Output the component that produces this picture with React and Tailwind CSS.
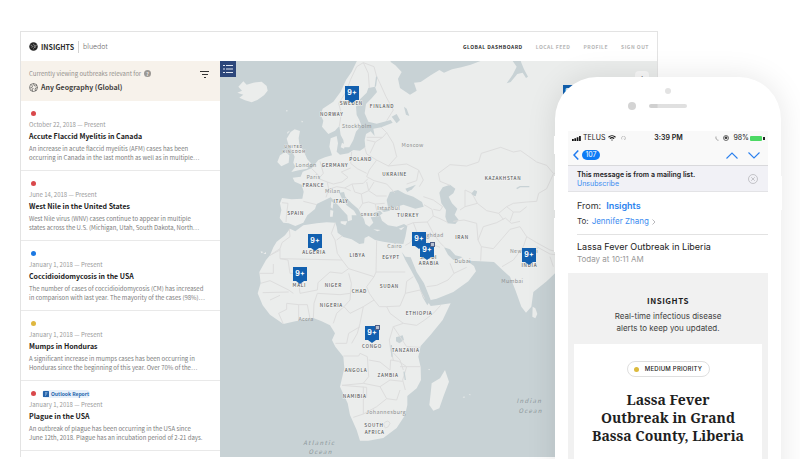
import React from "react";

const outbreaks = [
  {
    dot: "bg-[#d9484b]",
    date: "October 22, 2018 — Present",
    title: "Accute Flaccid Myelitis in Canada",
    lines: [
      "An increase in acute flaccid myelitis (AFM) cases has been",
      "occurring in Canada in the last month as well as in multiple…",
    ],
  },
  {
    dot: "bg-[#d9484b]",
    date: "June 14, 2018 — Present",
    title: "West Nile in the United States",
    lines: [
      "West Nile virus (WNV) cases continue to appear in multiple",
      "states across the U.S. (Michigan, Utah, South Dakota, North…",
    ],
  },
  {
    dot: "bg-[#1b78e2]",
    date: "January 1, 2018 — Present",
    title: "Coccidioidomycosis in the USA",
    lines: [
      "The number of cases of coccidioidomycosis (CM) has increased",
      "in comparison with last year. The mayority of the cases (98%)…",
    ],
  },
  {
    dot: "bg-[#dfb73f]",
    date: "January 1, 2018 — Present",
    title: "Mumps in Honduras",
    lines: [
      "A significant increase in mumps cases has been occurring in",
      "Honduras since the beginning of this year. Over 70% of the…",
    ],
  },
  {
    dot: "bg-[#d9484b]",
    date: "January 1, 2018 — Present",
    title: "Plague in the USA",
    report: true,
    lines: [
      "An outbreak of plague has been occurring in the USA since",
      "June 12th, 2018. Plague has an incubation period of 2-21 days.",
    ],
  },
];

// Map drawing units: three per pixel.
const MAINLAND =
  "M412,0 L395,35 378,60 362,95 340,125 308,146 302,165 310,182 306,200 325,222 345,212 358,198 362,225 370,240 373,262 388,262 400,240 408,215 424,196 418,180 410,165 408,140 420,118 440,98 445,84 465,80 471,96 455,115 438,132 434,160 445,185 470,191 512,180 518,188 484,202 460,206 464,228 452,214 438,222 434,240 436,262 420,272 400,270 385,280 360,284 350,275 354,250 350,228 332,235 328,260 336,286 315,292 295,300 275,325 248,335 242,350 218,353 224,365 245,374 251,395 247,416 215,418 186,414 180,430 184,450 179,474 190,488 206,490 226,498 250,488 262,466 285,447 290,432 315,420 332,412 348,428 365,448 382,466 384,484 396,480 395,466 410,466 402,452 380,436 366,416 358,398 372,396 376,410 395,430 415,447 425,466 432,478 436,492 448,500 460,488 452,472 468,470 462,458 480,452 488,460 480,466 486,482 504,496 530,500 552,492 562,498 556,530 550,552 520,550 490,545 465,540 446,528 434,534 432,550 418,552 395,538 370,531 353,518 350,500 346,488 320,487 290,490 250,496 226,514 210,506 195,526 170,545 160,562 150,586 138,600 118,636 122,670 113,700 128,736 150,764 190,792 226,784 280,774 305,784 330,796 345,820 336,840 346,860 370,890 373,925 360,980 383,1030 390,1065 410,1110 420,1142 445,1142 490,1134 530,1104 555,1066 562,1035 562,1008 590,985 603,960 602,922 595,890 602,858 632,824 668,780 692,730 662,734 632,738 622,722 650,716 700,696 745,664 768,634 762,618 742,604 734,588 718,596 700,600 684,584 672,562 690,568 706,586 724,590 745,602 780,604 822,606 850,632 870,650 886,690 904,740 918,758 934,740 940,696 980,664 1005,640 1060,620 1110,700 1311,760 2600,760 2600,-200 430,-200 Z";

const COUNTRY_LINES =
  "M358,198 L364,160 356,130 378,96 392,58 410,20 430,8 M430,8 L445,40 448,84 M430,8 L462,20 470,50 480,70 498,110 520,150 500,182 M484,202 L500,218 488,232 440,232 M500,218 L520,250 530,290 505,318 470,300 440,282 434,262 M440,240 L466,246 488,232 M466,246 L450,280 M505,318 L560,312 596,330 590,362 560,372 M470,300 L448,330 440,350 462,362 500,372 524,398 M395,276 L392,310 412,326 440,340 M300,304 L310,340 296,356 322,366 340,372 366,366 384,352 364,336 392,324 M275,326 L296,346 M322,366 L326,388 318,412 M326,388 L350,380 374,384 396,372 430,370 444,356 M374,384 L392,392 M396,372 L404,396 424,402 428,430 418,446 M424,402 L446,392 440,366 M446,392 L470,408 500,408 M428,430 L446,426 466,432 494,430 M466,432 L470,452 M250,424 L290,434 M186,428 L204,430 200,460 198,486 M446,392 L462,366 M560,496 L580,488 622,486 640,468 636,448 612,434 M640,468 L660,476 684,488 M622,486 L640,520 660,548 672,560 M580,488 L592,520 570,548 556,556 M592,520 L624,548 660,562 M610,410 L640,420 668,440 660,452 640,448 M596,330 L610,360 598,380 M700,484 L732,480 770,490 774,540 784,560 782,602 M774,540 L790,500 830,488 856,474 874,490 900,484 M784,560 L820,566 846,536 870,508 900,500 920,530 910,560 880,600 846,620 M655,340 L690,314 740,318 776,306 784,280 842,262 880,276 902,272 950,306 980,316 1000,340 1020,340 M655,340 L660,364 690,376 M735,390 L735,440 772,430 800,452 836,460 860,440 880,430 920,426 950,424 956,400 980,386 1000,342 M735,440 L720,450 M772,430 L756,400 735,390 M836,460 L850,478 M860,440 L880,456 900,456 920,440 M880,456 L870,484 M920,530 L950,548 990,570 1030,580 M950,560 L990,582 1020,586 M990,590 L1000,620 M620,680 L650,676 684,660 702,640 740,622 M702,640 L690,610 M208,506 L210,530 186,548 180,566 150,586 M346,488 L334,520 345,540 352,580 366,600 M350,540 L366,528 M470,542 L468,636 556,636 M468,636 L462,650 386,626 366,640 330,636 294,668 292,690 240,700 232,640 210,640 204,600 180,596 180,566 M180,596 L366,600 386,626 M150,586 L180,570 M118,640 L160,640 160,612 M122,670 L150,662 206,690 220,700 M128,698 L206,696 M150,720 L180,706 M190,792 L176,760 200,748 200,730 236,734 236,780 M236,734 L262,734 270,776 M280,774 L282,730 292,700 M386,640 L394,670 390,720 372,740 M292,700 L360,704 390,700 M372,740 L350,760 340,790 M372,740 L390,760 430,740 462,720 448,700 440,680 462,650 M462,720 L478,740 500,740 540,738 556,700 560,664 580,650 M556,700 L600,690 614,716 M500,740 L510,760 550,790 590,796 614,780 640,760 662,736 M550,790 L520,800 508,840 512,870 520,900 M520,800 L560,860 600,862 M430,740 L420,790 412,820 395,850 M346,850 L380,850 386,820 420,800 M370,888 L416,888 420,880 442,890 446,950 430,970 366,976 M446,900 L480,906 510,930 512,900 536,904 560,920 548,960 M430,970 L480,980 510,960 548,964 M366,976 L440,982 440,1010 430,1018 M430,980 L430,1062 400,1072 M430,1062 L470,1040 500,1016 480,980 M500,1016 L530,1020 540,990 M540,920 L602,920 M490,1092 q14,-16 20,-2 q-4,14 -14,14 z M548,960 L556,990 M512,870 L540,900 550,930";

const RIVERS =
  "M470,50 L466,80 M514,855 L516,890 M552,935 L556,960 M890,386 L900,380 928,380 M755,400 l10,6 4,-12";

const labels = [
  ["SWEDEN", 394, 134], ["FINLAND", 486, 143], ["NORWAY", 335, 168], ["POLAND", 422, 304],
  ["GERMANY", 345, 320], ["FRANCE", 280, 381], ["UKRAINE", 524, 349], ["ITALY", 363, 428],
  ["SPAIN", 227, 464], ["TURKEY", 564, 470], ["ALGERIA", 282, 582], ["LIBYA", 412, 591],
  ["EGYPT", 513, 596], ["MALI", 238, 680], ["NIGER", 340, 680], ["CHAD", 418, 698],
  ["SUDAN", 508, 685], ["NIGERIA", 334, 741], ["ETHIOPIA", 597, 765], ["CONGO", 456, 864],
  ["TANZANIA", 557, 876], ["ANGOLA", 408, 936], ["ZAMBIA", 504, 951], ["NAMIBIA", 404, 1015],
  ["SOUTH", 462, 1101], ["AFRICA", 464, 1122], ["KAZAKHSTAN", 849, 360], ["IRAN", 726, 537],
  ["SAUDI", 626, 596], ["ARABIA", 627, 615], ["INDIA", 928, 620],
];

const smallLabels = [
  ["UNITED", 221, 265], ["KINGDOM", 223, 279], ["GREECE", 450, 468],
];

const cities = [
  ["Stockholm", 411, 204], ["London", 258, 321], ["Paris", 280, 357], ["Milan", 338, 398],
  ["Moscow", 578, 261], ["Istanbul", 506, 450], ["Cairo", 524, 565], ["Baghdad", 634, 532],
  ["Dubai", 728, 610], ["Accra", 258, 783], ["Johannesburg", 498, 1062], ["New Delhi", 912, 579],
  ["Mumbai", 877, 668],
];

const oceans = [
  ["Atlantic", 298, 1154], ["Ocean", 302, 1183], ["Indian", 928, 1030], ["Ocean", 932, 1059],
];

const markers = [
  { place: "Sweden", pos: "left-[125px] top-[25px]" },
  { place: "Algeria", pos: "left-[88px] top-[173px]" },
  { place: "Mali", pos: "left-[73px] top-[206px]" },
  { place: "Congo", pos: "left-[145px] top-[265px]", report: true },
  { place: "Iraq", pos: "left-[192px] top-[171px]" },
  { place: "Saudi Arabia", pos: "left-[200px] top-[182px]", report: true },
  { place: "India", pos: "left-[302px] top-[187px]" },
  { place: "Mongolia", pos: "left-[343px] top-[24px]" },
];

function WorldMap() {
  return (
    <svg
      className="absolute left-0 top-0 h-[397px] w-[437px] overflow-visible"
      viewBox="0 3 1311 1191"
      aria-label="Outbreak map"
    >
      <g fill="#ebedec">
        <path d={MAINLAND} />
        <path d="M55,80 L70,64 80,74 100,68 125,65 140,78 143,92 132,106 112,120 95,127 75,121 58,113 70,104 52,98 66,92Z" />
        <path d="M212,216 L224,208 240,213 236,234 238,252 252,276 262,298 273,310 262,326 236,331 214,336 226,320 220,308 224,290 216,272 206,256 200,236Z" />
        <path d="M180,286 L196,276 208,286 206,308 184,319 172,306Z" />
        <path d="M675,930 L687,965 670,1010 658,1045 640,1052 628,1035 632,1000 635,970 660,955Z" />
        <path d="M938,740 L946,745 952,762 946,775 937,770Z" />
        <path d="M334,424 l6,4 -2,18 -6,-4z M331,450 l9,2 -2,18 -8,0z" />
        <path d="M362,484 l20,0 -6,12 -14,-6z M460,508 l22,2 -10,4z M536,506 l18,-6 -10,10z" />
        <path d="M366,248 l10,6 -4,12 -10,-4z M198,150 l6,2 -4,3z M244,182 l5,2 -3,4z M202,216 l8,-4 -8,10z" />
        <path d="M122,574 l8,2 -6,4z M130,582 l8,-6 0,6z M728,1012 l5,-3 1,5z M746,1004 l5,-2 0,4z M624,928 l6,-1 -2,4z" />
      </g>
      <g fill="#c8d2d5">
        <path d="M508,-60 L512,6 526,16 545,36 534,56 540,84 570,104 590,92 582,68 602,66 632,46 658,30 672,38 696,28 724,22 752,14 784,2 800,-60Z" />
        <path d="M876,0 L890,20 878,44 860,70 872,66 892,42 908,38 918,54 924,50 912,28 904,8 898,-10Z" />
        <path d="M500,420 L510,396 534,390 556,402 580,410 606,426 611,440 586,446 550,434 524,442 504,440Z" />
        <path d="M556,386 L588,374 576,388 562,396Z" />
        <path d="M658,398 L668,382 690,374 706,386 700,400 686,410 696,430 712,446 704,464 716,480 706,492 682,490 676,470 678,450 664,430Z" />
        <path d="M545,576 L556,590 572,592 590,636 612,670 624,700 632,720 622,736 608,712 596,674 574,632 556,600Z" />
        <path d="M515,170 L530,162 540,180 530,190Z M552,140 l8,6 8,22 -10,-4z" />
        <path d="M528,832 L548,826 552,840 538,850 528,844Z" />
        <path d="M484,452 l22,-6 4,6 -18,4z" />
        <path d="M755,400 l8,-10 8,4 -4,14 -8,-2z" />
      </g>
      <path d={COUNTRY_LINES} fill="none" stroke="#dddddd" strokeWidth="3" strokeLinejoin="round" />
      <path d={RIVERS} fill="none" stroke="#c8d2d5" strokeWidth="4" />
      <g textAnchor="middle" className="font-['Noto_Sans_CJK_SC','Noto_Sans',sans-serif]">
        <g fill="#5c5e5f" fontSize="14" fontWeight="500" letterSpacing="2" stroke="#f3f4f3" strokeWidth="3" paintOrder="stroke">
          {labels.map(([t, x, y]) => (
            <text key={t} x={x} y={y}>{t}</text>
          ))}
        </g>
        <g fill="#7b7d7e" fontSize="12" fontWeight="500" letterSpacing="2" stroke="#f3f4f3" strokeWidth="2" paintOrder="stroke">
          {smallLabels.map(([t, x, y]) => (
            <text key={t} x={x} y={y}>{t}</text>
          ))}
        </g>
        <g fill="#8f9192" fontSize="16" letterSpacing="1">
          {cities.map(([t, x, y]) => (
            <text key={t} x={x} y={y}>{t}</text>
          ))}
        </g>
        <g fill="#8c979b" fontSize="18" fontStyle="italic" letterSpacing="4">
          {oceans.map(([t, x, y]) => (
            <text key={t + y} x={x} y={y}>{t}</text>
          ))}
        </g>
      </g>
    </svg>
  );
}

function Marker({ place, pos, report }) {
  return (
    <button
      type="button"
      aria-label={place + ", 9+ outbreaks"}
      className={"absolute h-[14px] w-[14px] bg-[#1260af] text-center font-['Inter',sans-serif] text-[7px] leading-[14px] font-bold text-white " + pos}
    >
      9+
      <span className="absolute left-1/2 top-full -translate-x-1/2 border-x-[4px] border-t-[3px] border-x-transparent border-t-[#1260af]" />
      {report && (
        <span className="absolute -top-px -right-px h-[5px] w-[5px] border border-[#4f5f86] bg-[#b9c1d2]" />
      )}
    </button>
  );
}

function Outbreak({ item }) {
  return (
    <li className="h-[70px] border-b border-[#e9e9e9] pl-2 pt-2 whitespace-nowrap">
      <div className="flex h-[9px] items-center">
        <span className={"ml-[2px] h-[5px] w-[5px] rounded-full " + item.dot} />
        {item.report && (
          <a href="#report" className="ml-[6px] flex h-[8px] items-center gap-[2px] rounded-sm bg-[#e8f1fb] px-px text-[5px] leading-[8px] font-bold text-[#2463ab]">
            <svg className="h-[6px] w-[6px]" viewBox="0 0 12 12" aria-hidden="true">
              <rect width="12" height="12" rx="1" fill="#2463ab" />
              <path d="M4 3.5h5M4 6h4M4 8.500h2" stroke="#cfe0f3" strokeWidth="1.2" />
            </svg>
            Outlook Report
          </a>
        )}
      </div>
      <p className="mt-[3px] text-[6px] leading-[8px] text-[#9a9a9a]">{item.date}</p>
      <h2 className="mt-[2px] text-[7px] leading-[11px] font-bold text-[#1c1c1c]">{item.title}</h2>
      <p className="mt-[2px] text-[6px] leading-[9px] text-[#7c7c7c]">
        {item.lines[0]}
        <br />
        {item.lines[1]}
      </p>
    </li>
  );
}

function Dashboard() {
  return (
    <div className="mr-[142px] ml-5 border-x border-t border-[#e3e3e3] bg-white font-['Noto_Sans_CJK_SC','Noto_Sans',sans-serif]">
      <header className="flex h-[29px] items-center justify-between pr-2 pl-2">
        <div className="flex items-center">
          <svg className="h-[9px] w-[9px]" viewBox="0 0 18 18" aria-hidden="true">
            <circle cx="9" cy="9" r="8.500" fill="#262626" />
            <path d="M3 6l3 1 1 3-2 1M8 4l3 2-1 4 2 2 1-5 3-1M8 13l2 1" fill="none" stroke="#a9a9a9" strokeWidth="1.300" />
          </svg>
          <span className="ml-[3px] text-[7px] leading-[12px] font-bold text-[#2b2b2b]">INSIGHTS</span>
          <span className="mx-1 h-3 w-px bg-[#d2d2d2]" />
          <span className="font-['Inter',sans-serif] text-[7px] leading-[12px] font-light text-[#6f6f6f]">bluedot</span>
        </div>
        <nav className="flex gap-[13px] text-[5px] leading-[9px] font-bold tracking-[0.5px] text-[#b5b5b5]">
          <a href="#dashboard" className="text-[#303030]">GLOBAL DASHBOARD</a>
          <a href="#feed">LOCAL FEED</a>
          <a href="#profile">PROFILE</a>
          <a href="#signout">SIGN OUT</a>
        </nav>
      </header>
      <div className="flex">
        <aside className="w-[199px] shrink-0 pb-[6px]">
          <div className="flex h-10 items-start justify-between bg-[#f7f2eb] pr-[11px] pl-2">
            <div className="pt-[7px]">
              <p className="flex items-center gap-[3px] text-[6px] leading-[11px] text-[#94918d]">
                Currently viewing outbreaks relevant for
                <span className="flex h-[7px] w-[7px] items-center justify-center rounded-full bg-[#9b9894] text-[5px] leading-[7px] font-bold text-[#f7f2eb]">?</span>
              </p>
              <p className="mt-[3px] flex items-center gap-[3px] text-[7px] leading-[11px] font-bold text-[#454341]">
                <svg className="h-[9px] w-[9px]" viewBox="0 0 18 18" fill="none" stroke="#555" strokeWidth="1.400" aria-hidden="true">
                  <circle cx="9" cy="9" r="8" />
                  <path d="M4 3l3 3-1 3-4 1M7 17l-1-5 3-1M9 1l1 4 3 1 3-2M17 9l-4 1-1 4 2 2" />
                </svg>
                Any Geography (Global)
              </p>
            </div>
            <button type="button" aria-label="Filter outbreaks" className="mt-[10px] flex w-[9px] flex-col items-center gap-[2px]">
              <span className="h-px w-[9px] bg-[#333]" />
              <span className="h-px w-[6px] bg-[#333]" />
              <span className="h-px w-[2px] bg-[#333]" />
            </button>
          </div>
          <ul>
            {outbreaks.map((o) => (
              <Outbreak key={o.title} item={o} />
            ))}
          </ul>
        </aside>
        <main className="relative flex-1 overflow-hidden bg-[#c8d2d5]">
          <WorldMap />
          {markers.map((m) => (
            <Marker key={m.place} {...m} />
          ))}
          <button type="button" aria-label="Toggle list" className="absolute top-0 left-0 flex h-4 w-4 items-center justify-center bg-[#2d477b]">
            <svg className="h-[10px] w-[10px]" viewBox="0 0 10 10" aria-hidden="true">
              <path d="M0 1.500h2M3 1.500h7M0 5h2M3 5h7M0 8.500h2M3 8.500h7" stroke="#dfe6f2" strokeWidth="1.200" />
            </svg>
          </button>
          <button type="button" aria-label="Zoom in" className="absolute top-[10px] right-2 h-[14px] w-[14px] rounded-sm bg-[#f8f8f8] text-[8px] leading-[10px] font-bold text-[#444]">
            +
          </button>
        </main>
      </div>
    </div>
  );
}

function Phone() {
  return (
    <div className="absolute top-[77px] right-[19px] w-[226px] rounded-t-[42px] bg-white px-[13px] pb-24 font-['Inter',sans-serif] shadow-[0_0_30px_rgba(0,0,0,0.10)]">
      <span className="absolute top-[59px] -left-px h-[18px] w-px bg-white" />
      <span className="absolute top-[99px] -left-px h-[34px] w-px bg-white" />
      <span className="absolute top-[141px] -left-px h-[34px] w-px bg-white" />
      <span className="absolute top-[99px] -right-px h-[34px] w-px bg-white" />

      <div className="flex h-[54px] flex-col items-center pt-[11px]">
        <span className="h-[6px] w-[6px] rounded-full bg-[#e3e3e3]" />
        <div className="mt-2 mr-[22px] flex items-center gap-[13px]">
          <span className="h-2 w-2 rounded-full bg-[#d4d4d4]" />
          <span className="h-1 w-[38px] rounded-full bg-gradient-to-r from-[#d0d0d0] from-20% to-[#e0e0e0] to-25%" />
        </div>
      </div>

      <div className="border-b border-[#d9d9dc] bg-[#f9f9f9]">
        <div className="grid h-[14px] grid-cols-[1fr_auto_1fr] items-center pr-[3px] pl-1 text-[7px] leading-[10px] text-[#222]">
          <div className="flex items-center gap-[2px]">
            <svg className="h-[5px] w-[9px]" viewBox="0 0 18 10" fill="#111" aria-hidden="true">
              <rect x="0" y="6" width="3.500" height="4" />
              <rect x="4.700" y="4.500" width="3.500" height="5.500" />
              <rect x="9.400" y="2.500" width="3.500" height="7.500" />
              <rect x="14.100" y="0" width="3.500" height="10" />
            </svg>
            <span>TELUS</span>
            <svg className="ml-px h-[6px] w-[8px]" viewBox="0 0 16 12" fill="none" stroke="#111" strokeWidth="2.200" aria-hidden="true">
              <path d="M1 4.500C5 .5 11 .5 15 4.500M3.800 7.300c2.400-2.300 6-2.300 8.400 0" />
              <path d="M6 9.500h4L8 11.500z" fill="#111" stroke="none" />
            </svg>
            <svg className="ml-[3px] h-[5px] w-[5px]" viewBox="0 0 10 10" fill="none" stroke="#b5b5b5" strokeWidth="1.500" aria-hidden="true">
              <path d="M2 7a4 4 0 1 1 6 0M6 5l2 3" />
            </svg>
          </div>
          <span className="font-semibold">3:39 PM</span>
          <div className="flex items-center justify-end gap-px">
            <svg className="mr-[3px] h-[5px] w-[4px]" viewBox="0 0 8 10" fill="none" stroke="#888" strokeWidth="1.500" aria-hidden="true">
              <path d="M2 1C1 5 3 8.500 7 8.500" />
            </svg>
            <svg className="mr-[3px] h-[6px] w-[6px]" viewBox="0 0 12 12" fill="none" stroke="#333" strokeWidth="1.400" aria-hidden="true">
              <circle cx="6" cy="6" r="5" />
              <path d="M4 7V5.500a2 2 0 0 1 4 0V7z" fill="#333" />
            </svg>
            <span>98%</span>
            <span className="h-[5px] w-[12px] rounded-[1px] bg-[#4cd964]" />
            <span className="h-[3px] w-[2px] bg-[#222]" />
          </div>
        </div>
        <div className="flex h-5 items-center justify-between pr-2 pl-[5px]">
          <a href="#inbox" className="flex items-center gap-[3px]">
            <svg className="h-[10px] w-[6px]" viewBox="0 0 12 20" fill="none" stroke="#1f7bf0" strokeWidth="3" aria-hidden="true">
              <path d="M10.500 1L2 10l8.500 9" />
            </svg>
            <span className="flex h-[10px] w-[18px] items-center justify-center rounded-full bg-[#0d7bf5] text-[7px] leading-[10px] text-white">107</span>
          </a>
          <div className="flex gap-[10px]">
            <button type="button" aria-label="Previous message">
              <svg className="h-[7px] w-[12px]" viewBox="0 0 24 14" fill="none" stroke="#2b80ee" strokeWidth="2.200" aria-hidden="true">
                <path d="M1 13L12 2l11 11" />
              </svg>
            </button>
            <button type="button" aria-label="Next message">
              <svg className="h-[7px] w-[12px]" viewBox="0 0 24 14" fill="none" stroke="#2b80ee" strokeWidth="2.200" aria-hidden="true">
                <path d="M1 1l11 11L23 1" />
              </svg>
            </button>
          </div>
        </div>
      </div>

      <div className="flex h-[26px] items-center justify-between border-b border-[#e3e3e6] bg-[#f1f1f6] pr-[10px] pl-[9px]">
        <div className="text-[7px] leading-[9px]">
          <p className="font-semibold text-[#1d1d1f]">This message is from a mailing list.</p>
          <a href="#unsubscribe" className="block text-[#3a8bf0]">Unsubscribe</a>
        </div>
        <button type="button" aria-label="Dismiss">
          <svg className="h-[10px] w-[10px]" viewBox="0 0 20 20" fill="none" stroke="#b4b4b9" strokeWidth="1.500" aria-hidden="true">
            <circle cx="10" cy="10" r="9" />
            <path d="M6.500 6.500l7 7M13.500 6.500l-7 7" />
          </svg>
        </button>
      </div>

      <div className="bg-white pl-[9px]">
        <div className="border-b border-[#e2e2e2] pt-[7px] pb-[6px]">
          <p className="flex items-center text-[9px] leading-[14px] text-[#333]">
            From: <a href="#sender" className="ml-[5px] font-semibold text-[#2a82ee]">Insights</a>
          </p>
          <p className="mt-[2px] flex items-center text-[8px] leading-[13px] text-[#333]">
            To:
            <a href="#recipient" className="ml-[3px] text-[#3a8bf0]">Jennifer Zhang</a>
            <svg className="ml-[3px] h-[6px] w-[4px]" viewBox="0 0 8 12" fill="none" stroke="#b9b9bd" strokeWidth="2" aria-hidden="true">
              <path d="M1 1l5 5-5 5" />
            </svg>
          </p>
        </div>
        <h2 className="pt-[5px] text-[9px] leading-[13px] text-[#222]">Lassa Fever Outbreak in Liberia</h2>
        <p className="pb-[7px] text-[8px] leading-[13px] text-[#999]">Today at 10:11 AM</p>
      </div>

      <div className="bg-[#f1f1f1] px-[6px] pt-[21px] text-center">
        <p className="font-['Noto_Sans_CJK_SC','Noto_Sans',sans-serif] text-[8px] leading-[13px] font-bold tracking-[0.5px] text-[#1d1d1d]">INSIGHTS</p>
        <p className="mt-[3px] text-[8px] leading-[12px] text-[#3f3f3f]">
          Real-time infectious disease
          <br />
          alerts to keep you updated.
        </p>
        <div className="mt-[10px] bg-white pt-[17px] pb-10">
          <span className="mx-auto flex h-4 w-[83px] items-center justify-center gap-[6px] rounded-full border border-[#dfdfdf] text-[6px] leading-[8px] font-medium tracking-[0.2px] text-[#222]">
            <span className="h-[5px] w-[5px] rounded-full bg-[#dcba3c]" />
            MEDIUM PRIORITY
          </span>
          <h1 className="mt-[14px] font-['Noto_Serif','Droid_Serif','DejaVu_Serif_Condensed','DejaVu_Serif',serif] text-[14px] leading-[18px] font-bold text-[#1f1f1f]">
            Lassa Fever
            <br />
            Outbreak in Grand
            <br />
            Bassa County, Liberia
          </h1>
        </div>
      </div>
    </div>
  );
}

export default function App() {
  return (
    <div className="relative min-h-screen overflow-hidden bg-white pt-[31px]">
      <Dashboard />
      <Phone />
    </div>
  );
}
